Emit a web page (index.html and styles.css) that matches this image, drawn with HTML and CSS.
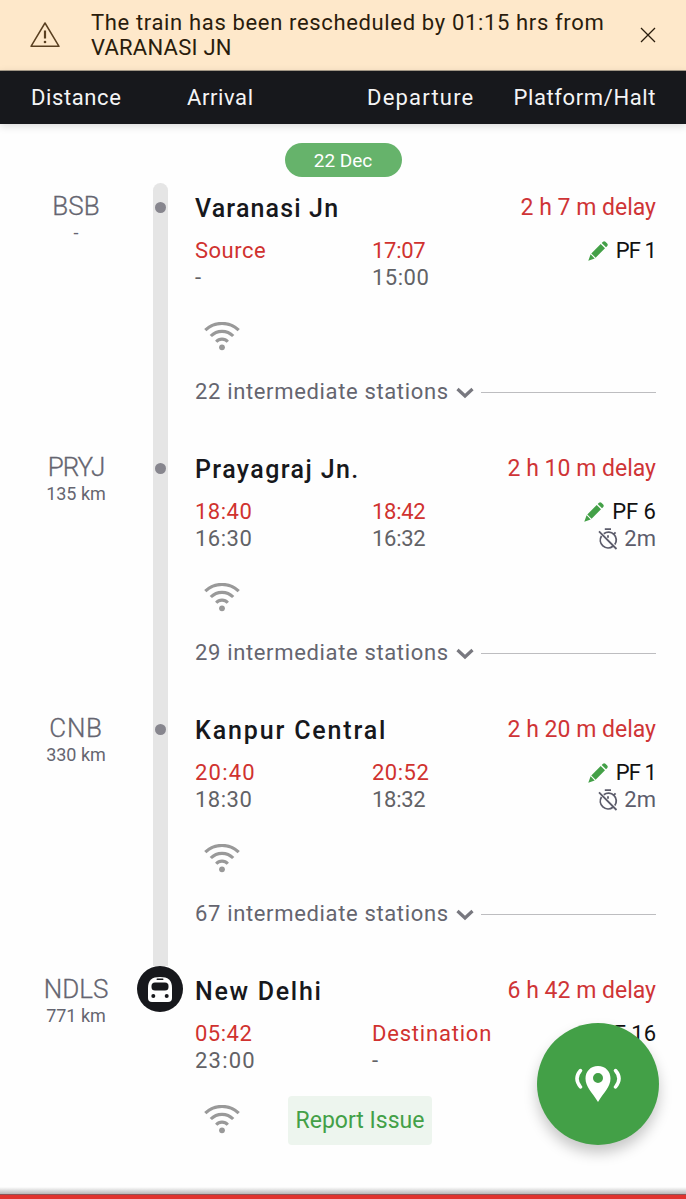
FILE: index.html
```html
<!DOCTYPE html>
<html lang="en">
<head>
  <meta charset="UTF-8">
  <meta name="viewport" content="width=device-width, initial-scale=1.0">
  <title>Train Running Status</title>
  <link rel="stylesheet" href="styles.css">
</head>
<body>

  <!-- Shared icons -->
  <svg class="sprite" aria-hidden="true">
    <symbol id="wifi" viewBox="0 0 36 29">
      <path d="M1.300 8.200 A24 24 0 0 1 34.700 8.200" fill="none" stroke="currentColor" stroke-width="3.200"/>
      <path d="M6.800 14 A15.700 15.700 0 0 1 29.200 14" fill="none" stroke="currentColor" stroke-width="3.200"/>
      <path d="M12.200 19.700 A7.800 7.800 0 0 1 23.800 19.700" fill="none" stroke="currentColor" stroke-width="3.100"/>
      <circle cx="18" cy="25.300" r="2.900" fill="currentColor"/>
    </symbol>
    <symbol id="pencil" viewBox="0 0 20 20">
      <path d="M3.300 12.400 L12.700 3 L17 7.300 L7.600 16.700 Z M13.700 2 L15 .700 Q16.200 -.300 17.400 .800 L19.200 2.600 Q20.300 3.800 19.300 5 L18 6.300 Z M2.600 13.300 L6.700 17.400 L.300 19.700 Z" fill="currentColor"/>
    </symbol>
    <symbol id="timer" viewBox="0 0 20 22">
      <g fill="none" stroke="currentColor" stroke-width="1.800">
        <path d="M6.800 1.200 H13 M5.800 5.700 A7.800 7.800 0 0 1 16.800 16.500 M14.900 18.200 A7.800 7.800 0 0 1 3.500 7.900 M1 3.400 L18.500 21 M15.800 6.200 L17.600 4.400 M10 7.300 V9.800"/>
      </g>
    </symbol>
    <symbol id="chevron" viewBox="0 0 18 12">
      <path d="M1.500 2 L9 9 L16.500 2" fill="none" stroke="currentColor" stroke-width="3.200"/>
    </symbol>
  </svg>

  <div class="app">
    <div class="alert">
      <svg class="alert-icon" viewBox="0 0 32 28">
        <path d="M16 2 L30 25.300 H2 Z" fill="none" stroke="currentColor" stroke-width="1.500" stroke-linejoin="round"/>
        <path d="M16 9.500 V17.500" stroke="currentColor" stroke-width="2.200"/>
        <circle cx="16" cy="21" r="1.300" fill="currentColor"/>
      </svg>
      <p>The train has been rescheduled by 01:15 hrs from<br><span class="origin">VARANASI JN</span></p>
      <svg class="alert-close" viewBox="0 0 16 16">
        <path d="M1 1 L15 15 M15 1 L1 15" stroke="currentColor" stroke-width="1.300"/>
      </svg>
    </div>

    <header class="columns">
      <span>Distance</span>
      <span>Arrival</span>
      <span>Departure</span>
      <span>Platform/Halt</span>
    </header>

    <div class="date">22 Dec</div>

    <main>
      <section class="station first">
        <div class="distance"><div class="code">BSB</div><div class="km">-</div></div>
        <div class="rail"><i class="dot"></i></div>
        <div class="details">
          <div class="title"><h2 class="n1">Varanasi Jn</h2><span class="delay">2 h 7 m delay</span></div>
          <div class="times">
            <div><b>Source</b><span>-</span></div>
            <div><b class="tight">17:07</b><span>15:00</span></div>
            <div class="platform"><p class="narrow"><svg class="pencil"><use href="#pencil"/></svg>PF 1</p></div>
          </div>
          <div class="signal"><svg class="wifi"><use href="#wifi"/></svg></div>
          <div class="more"><span>22 intermediate stations</span><svg class="chevron"><use href="#chevron"/></svg></div>
        </div>
      </section>

      <section class="station">
        <div class="distance"><div class="code pryj">PRYJ</div><div class="km">135 km</div></div>
        <div class="rail"><i class="dot"></i></div>
        <div class="details">
          <div class="title"><h2 class="n2">Prayagraj Jn.</h2><span class="delay">2 h 10 m delay</span></div>
          <div class="times">
            <div><b>18:40</b><span>16:30</span></div>
            <div><b class="tight">18:42</b><span class="tight">16:32</span></div>
            <div class="platform"><p><svg class="pencil"><use href="#pencil"/></svg>PF 6</p><p class="halt"><svg class="timer"><use href="#timer"/></svg>2m</p></div>
          </div>
          <div class="signal"><svg class="wifi"><use href="#wifi"/></svg></div>
          <div class="more"><span>29 intermediate stations</span><svg class="chevron"><use href="#chevron"/></svg></div>
        </div>
      </section>

      <section class="station">
        <div class="distance"><div class="code cnb">CNB</div><div class="km">330 km</div></div>
        <div class="rail"><i class="dot"></i></div>
        <div class="details">
          <div class="title"><h2 class="n3">Kanpur Central</h2><span class="delay">2 h 20 m delay</span></div>
          <div class="times">
            <div><b class="wide">20:40</b><span>18:30</span></div>
            <div><b>20:52</b><span class="tight">18:32</span></div>
            <div class="platform"><p class="narrow"><svg class="pencil"><use href="#pencil"/></svg>PF 1</p><p class="halt"><svg class="timer"><use href="#timer"/></svg>2m</p></div>
          </div>
          <div class="signal"><svg class="wifi"><use href="#wifi"/></svg></div>
          <div class="more"><span>67 intermediate stations</span><svg class="chevron"><use href="#chevron"/></svg></div>
        </div>
      </section>

      <section class="station last">
        <div class="distance"><div class="code">NDLS</div><div class="km">771 km</div></div>
        <div class="rail">
          <svg class="train" viewBox="0 0 46 46">
            <circle cx="23" cy="23" r="23" fill="#17181c"/>
            <path d="M11 22 C11 14 15 11 23 11 C31 11 35 14 35 22 V32 Q35 36 31 36 H15 Q11 36 11 32 Z" fill="#fff"/>
            <rect x="19.500" y="12.500" width="7" height="1.500" rx=".7" fill="#17181c"/>
            <rect x="14.500" y="16.500" width="17" height="8" rx="3.500" fill="#17181c"/>
            <circle cx="16.300" cy="30" r="2" fill="#17181c"/>
            <circle cx="29.700" cy="30" r="2" fill="#17181c"/>
          </svg>
        </div>
        <div class="details">
          <div class="title"><h2 class="n4">New Delhi</h2><span class="delay">6 h 42 m delay</span></div>
          <div class="times">
            <div><b>05:42</b><span class="wide">23:00</span></div>
            <div><b class="destination">Destination</b><span>-</span></div>
            <div class="platform"><p><svg class="pencil"><use href="#pencil"/></svg>PF 16</p></div>
          </div>
          <div class="signal">
            <svg class="wifi"><use href="#wifi"/></svg>
            <button class="report">Report Issue</button>
          </div>
        </div>
      </section>
    </main>

    <button class="locate" aria-label="Locate train">
      <svg viewBox="0 0 46 38">
        <path d="M23 1 C15.500 1 10.500 6.500 10.500 13.500 C10.500 22 17 27 23 37 C29 27 35.500 22 35.500 13.500 C35.500 6.500 30.500 1 23 1 Z M23 8 A5 5 0 1 1 23 18 A5 5 0 1 1 23 8 Z" fill="#fff" fill-rule="evenodd"/>
        <path d="M5.500 5.500 Q-1.500 13.500 5.500 22 M40.500 5.500 Q47.500 13.500 40.500 22" fill="none" stroke="#fff" stroke-width="3.500" stroke-linecap="round"/>
      </svg>
    </button>

    <footer class="bottom-bar"></footer>
  </div>

</body>
</html>
```
FILE: styles.css
```css
* {
  margin: 0;
  padding: 0;
  box-sizing: border-box;
}

body {
  font-family: Roboto, sans-serif;
  background: #fefefe;
  color: #17181c;
}

.sprite {
  position: absolute;
  width: 0;
  height: 0;
}

.app {
  position: relative;
  width: 686px;
  height: 1199px;
  overflow: hidden;
}

.alert {
  height: 71px;
  background: #fee8ca;
  border-bottom: 1px solid #a79c8a;
  display: flex;
  align-items: center;
  padding: 0 30px 0 29px;
  color: #2a1c0c;
}

.alert-icon {
  width: 32px;
  height: 28px;
  margin-right: 30px;
  color: #5a4021;
}

.alert p {
  flex: 1;
  font-size: 22px;
  line-height: 25px;
  letter-spacing: 0.65px;
  white-space: nowrap;
}

.alert .origin {
  letter-spacing: 0.25px;
}

.alert-close {
  width: 16px;
  height: 16px;
}

.columns {
  height: 53px;
  background: #17181c;
  color: #f4f4f5;
  display: grid;
  grid-template-columns: 156px 180px 1fr auto;
  align-items: center;
  padding: 0 30px 0 31px;
  font-size: 22px;
  letter-spacing: 0.6px;
  box-shadow: 0 2px 8px rgba(0, 0, 0, 0.15);
}

.columns span:nth-child(3) {
  width: 0;
  letter-spacing: 1.2px;
}

.date {
  width: 117px;
  height: 34px;
  margin: 19px auto 6px;
  border-radius: 17px;
  background: #66b36b;
  color: #fff;
  font-size: 19px;
  line-height: 35px;
  text-align: center;
}

.station {
  height: 261px;
  display: grid;
  grid-template-columns: 137px 46px 1fr;
  padding-right: 30px;
}

.distance {
  padding: 8px 0 0 15px;
  text-align: center;
  color: #656570;
}

.code {
  font-size: 26px;
  font-weight: 300;
  line-height: 30px;
  -webkit-text-stroke: 0.3px;
}

.code.pryj {
  letter-spacing: -1px;
}

.code.cnb {
  letter-spacing: 0.7px;
}

.km {
  font-size: 18px;
  line-height: 24px;
}

.rail {
  width: 15px;
  justify-self: center;
  background: #e5e5e5;
  padding-top: 19px;
}

.first .rail {
  border-radius: 8px 8px 0 0;
}

.last .rail {
  width: 46px;
  padding: 0;
  background: none;
}

.dot {
  display: block;
  width: 11px;
  height: 11px;
  margin: 0 auto;
  border-radius: 50%;
  background: #87868e;
}

.train {
  display: block;
  width: 46px;
  height: 46px;
}

.details {
  padding: 9px 0 0 12px;
}

.title {
  display: flex;
  justify-content: space-between;
  height: 45px;
}

.title h2 {
  font-size: 25px;
  font-weight: 500;
  line-height: 33px;
}

.n1 {
  letter-spacing: 1.15px;
}

.n2 {
  letter-spacing: 1.4px;
}

.n3 {
  letter-spacing: 1.85px;
}

.n4 {
  letter-spacing: 1.7px;
}

.delay {
  font-size: 23px;
  line-height: 32px;
  color: #cf3436;
}

.times {
  display: grid;
  grid-template-columns: 177px 130px 1fr;
  height: 85px;
  font-size: 22px;
  line-height: 27px;
  letter-spacing: 0.5px;
}

.times b,
.times span {
  display: block;
  font-weight: 400;
}

.times b {
  color: #d0322f;
}

.times span {
  color: #626266;
}

.times .wide {
  letter-spacing: 1.2px;
}

.times .tight {
  letter-spacing: -0.3px;
}

.times .destination {
  letter-spacing: 0.8px;
}

.platform {
  color: #111;
  letter-spacing: 0;
}

.platform p {
  display: flex;
  align-items: center;
  justify-content: flex-end;
}

.platform .narrow {
  letter-spacing: -0.9px;
}

.pencil {
  width: 20px;
  height: 20px;
  margin-right: 8px;
  color: #43a047;
}

.platform .halt {
  color: #5c5c6b;
}

.timer {
  width: 20px;
  height: 22px;
  margin-right: 6px;
}

.signal {
  display: flex;
  height: 56px;
  padding-left: 9px;
}

.wifi {
  width: 36px;
  height: 29px;
  color: #999;
}

.more {
  display: flex;
  align-items: center;
  height: 26px;
  font-size: 22px;
  letter-spacing: 0.65px;
  color: #65656f;
}

.more::after {
  content: "";
  flex: 1;
  height: 1px;
  margin-top: 2px;
  background: #bdbdc0;
}

.chevron {
  width: 18px;
  height: 12px;
  margin: 3px 7px 0;
  color: #78787f;
}

.report {
  width: 144px;
  height: 49px;
  margin: -9px 0 0 48px;
  border: none;
  border-radius: 4px;
  background: #edf5ee;
  color: #43a047;
  font: 400 23px Roboto, sans-serif;
}

.locate {
  position: absolute;
  left: 537px;
  top: 1023px;
  width: 122px;
  height: 122px;
  border: none;
  border-radius: 50%;
  background: #43a047;
  box-shadow: 0 8px 14px rgba(0, 0, 0, 0.22);
}

.locate svg {
  display: block;
  width: 46px;
  height: 38px;
  margin: 0 auto;
}

/* top edge of the banner that sits under the list */
.bottom-bar {
  position: absolute;
  left: 0;
  right: 0;
  bottom: 0;
  height: 12px;
  background: linear-gradient(#fefefe, #b9b9b9 7px, #8d5557 7px, #8d5557 8px, #e0342f 8px);
}
```
